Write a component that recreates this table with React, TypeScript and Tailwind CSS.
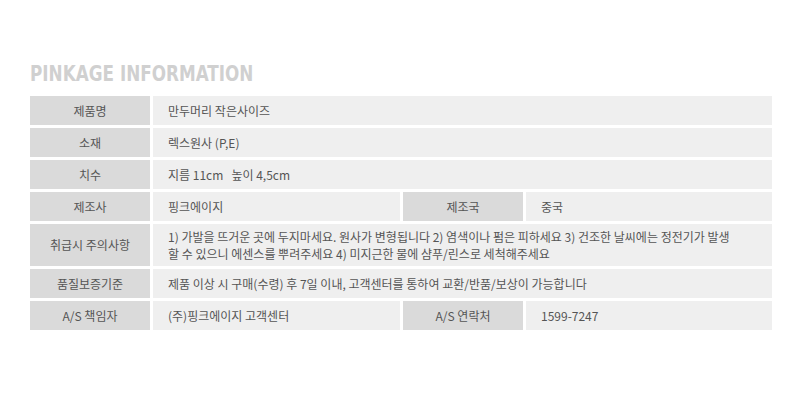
import React from 'react';

type Cell = { label: string; value: React.ReactNode };

const font = { fontFamily: '"Noto Sans CJK KR", "Noto Sans", sans-serif' };

const Label = ({ children }: { children: React.ReactNode }) => (
  <div className="flex items-center justify-center bg-[#dadada] text-[12px] text-[#555]">
    {children}
  </div>
);

const Value = ({ children, wide }: { children: React.ReactNode; wide?: boolean }) => (
  <div
    className={`flex items-center bg-[#efefef] pl-[15px] text-[12px] text-[#555] whitespace-nowrap ${
      wide ? 'col-span-3' : ''
    }`}
  >
    {children}
  </div>
);

const fullRows: Cell[] = [
  { label: '제품명', value: '만두머리 작은사이즈' },
  { label: '소재', value: '렉스원사 (P,E)' },
  { label: '치수', value: '지름 11cm\u00a0\u00a0 높이 4,5cm' },
];

export default function App() {
  return (
    <div className="w-[800px] h-[401px] bg-white pl-[30px] pt-[63px]" style={font}>
      <h2
        className="text-[22px] leading-[22px] font-bold text-[#d0d0d0] mb-[11px] origin-left scale-x-[0.85] whitespace-nowrap"
        style={{ fontFamily: '"DejaVu Sans Condensed", "Liberation Sans", sans-serif' }}
      >
        PINKAGE INFORMATION
      </h2>

      <div className="grid grid-cols-[120px_247px_120px_246px] grid-rows-[29px_29px_29px_29px_42px_29px_29px] gap-[3px]">
        {fullRows.map((row) => (
          <React.Fragment key={row.label}>
            <Label>{row.label}</Label>
            <Value wide>{row.value}</Value>
          </React.Fragment>
        ))}

        {/* manufacturer / country */}
        <Label>제조사</Label>
        <Value>핑크에이지</Value>
        <Label>제조국</Label>
        <Value>중국</Value>

        <Label>취급시 주의사항</Label>
        <div className="col-span-3 flex flex-col justify-center bg-[#efefef] pl-[15px] text-[12px] leading-[17px] text-[#555] whitespace-nowrap">
          <span>1) 가발을 뜨거운 곳에 두지마세요. 원사가 변형됩니다 2) 염색이나 펌은 피하세요 3) 건조한 날씨에는 정전기가 발생</span>
          <span>할 수 있으니 에센스를 뿌려주세요 4) 미지근한 물에 샴푸/린스로 세척해주세요</span>
        </div>

        <Label>품질보증기준</Label>
        <Value wide>제품 이상 시 구매(수령) 후 7일 이내, 고객센터를 통하여 교환/반품/보상이 가능합니다</Value>

        <Label>A/S 책임자</Label>
        <Value>(주)핑크에이지 고객센터</Value>
        <Label>A/S 연락처</Label>
        <Value>1599-7247</Value>
      </div>
    </div>
  );
}
